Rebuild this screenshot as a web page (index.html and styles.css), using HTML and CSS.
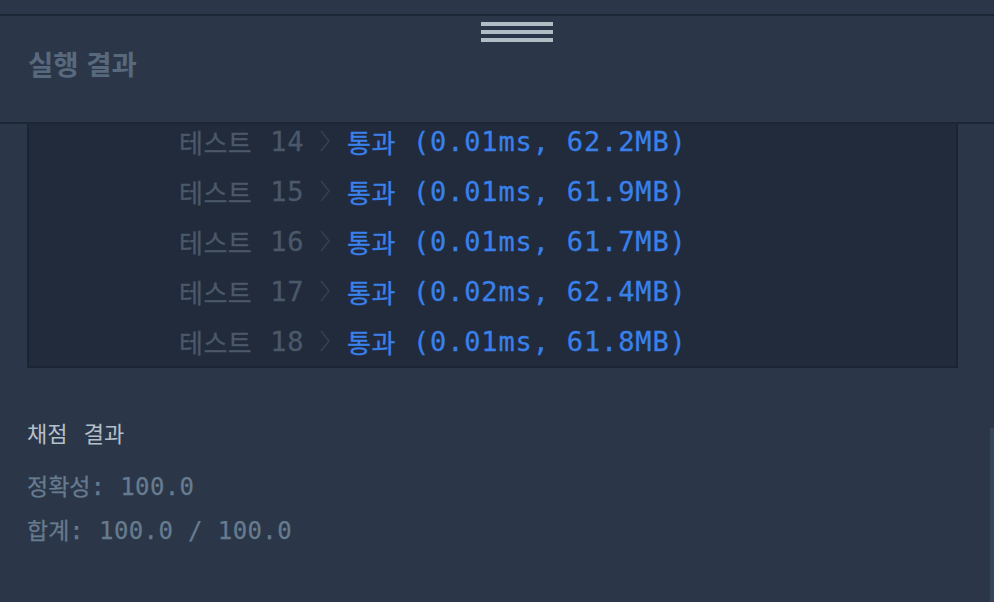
FILE: index.html
```html
<!DOCTYPE html>
<html lang="ko">
<head>
<meta charset="utf-8">
<title>실행 결과</title>
<link rel="stylesheet" href="styles.css">
</head>
<body>
<div class="page">
  <main class="content">
    <section class="tests">
      <div class="row"><span class="ko">테스트</span><span class="num">14</span><svg class="chev" viewBox="0 0 10 22" width="10" height="22"><path d="M1 1 L9 11 L1 21" fill="none" stroke="currentColor" stroke-width="1.4"/></svg><span class="res"><span class="ko">통과</span><span class="mono">(0.01ms, 62.2MB)</span></span></div>
      <div class="row"><span class="ko">테스트</span><span class="num">15</span><svg class="chev" viewBox="0 0 10 22" width="10" height="22"><path d="M1 1 L9 11 L1 21" fill="none" stroke="currentColor" stroke-width="1.4"/></svg><span class="res"><span class="ko">통과</span><span class="mono">(0.01ms, 61.9MB)</span></span></div>
      <div class="row"><span class="ko">테스트</span><span class="num">16</span><svg class="chev" viewBox="0 0 10 22" width="10" height="22"><path d="M1 1 L9 11 L1 21" fill="none" stroke="currentColor" stroke-width="1.4"/></svg><span class="res"><span class="ko">통과</span><span class="mono">(0.01ms, 61.7MB)</span></span></div>
      <div class="row"><span class="ko">테스트</span><span class="num">17</span><svg class="chev" viewBox="0 0 10 22" width="10" height="22"><path d="M1 1 L9 11 L1 21" fill="none" stroke="currentColor" stroke-width="1.4"/></svg><span class="res"><span class="ko">통과</span><span class="mono">(0.02ms, 62.4MB)</span></span></div>
      <div class="row"><span class="ko">테스트</span><span class="num">18</span><svg class="chev" viewBox="0 0 10 22" width="10" height="22"><path d="M1 1 L9 11 L1 21" fill="none" stroke="currentColor" stroke-width="1.4"/></svg><span class="res"><span class="ko">통과</span><span class="mono">(0.01ms, 61.8MB)</span></span></div>
    </section>
    <section class="score">
      <h3 class="score-title">채점 결과</h3>
      <p class="score-line"><span class="ko">정확성</span><span class="mono">: 100.0</span></p>
      <p class="score-line"><span class="ko">합계</span><span class="mono">: 100.0 / 100.0</span></p>
    </section>
  </main>
  <header class="panel-head">
    <div class="handle"><span></span><span></span><span></span></div>
    <h2 class="panel-title">실행 결과</h2>
  </header>
  <div class="scroll-thumb"></div>
</div>
</body>
</html>
```

FILE: styles.css
```css
* { box-sizing: border-box; }
html, body { margin: 0; padding: 0; }
body {
  background: #2b3748;
  font-family: "DejaVu Sans Mono", "Noto Sans CJK KR", monospace;
  overflow: hidden;
}
.page {
  position: relative;
  width: 994px;
  height: 602px;
  overflow: hidden;
  background: #2b3748;
}
.content {
  padding-top: 100px;
}
.tests {
  margin: 0 36px 0 27px;
  background: #212b3c;
  border: 2px solid #1b2433;
  border-top: none;
  padding: 16px 0 0 0;
}
.row {
  height: 50px;
  display: flex;
  align-items: center;
  padding-left: 150px;
  white-space: nowrap;
  -webkit-text-stroke: 0.3px currentColor;
}
.ko {
  font-family: "Noto Sans CJK KR", "Noto Sans", sans-serif;
  font-size: 26px;
  letter-spacing: 0.5px;
}
.row > .ko { color: #4b5869; }
.num {
  font-family: "DejaVu Sans Mono", monospace;
  font-size: 27px;
  letter-spacing: 0.65px;
  color: #4b5869;
  margin-left: 18px;
}
.chev {
  color: #364253;
  margin-left: 16px;
  flex: none;
}
.res {
  color: #3a80ea;
  margin-left: 17px;
  display: flex;
  align-items: center;
}
.res .mono {
  font-family: "DejaVu Sans Mono", monospace;
  font-size: 27px;
  letter-spacing: 0.85px;
  margin-left: 17px;
}
.score {
  padding: 0 27px;
  margin-top: 49px;
}
.score-title {
  margin: 0 0 16px 0;
  height: 30px;
  line-height: 30px;
  font-family: "Noto Sans CJK KR", sans-serif;
  font-weight: 400;
  font-size: 22px;
  color: #b5bfca;
  word-spacing: 10px;
}
.score-line {
  margin: 0;
  height: 44px;
  line-height: 44px;
  color: #677b8f;
  white-space: nowrap;
  -webkit-text-stroke: 0.25px currentColor;
}
.score-line .ko {
  font-size: 23px;
  letter-spacing: 0;
}
.score-line .mono {
  font-family: "DejaVu Sans Mono", monospace;
  font-size: 24px;
  letter-spacing: 0.4px;
}
.panel-head {
  position: absolute;
  top: 14px;
  left: 0;
  right: 0;
  height: 110px;
  background: #2b3748;
  border-top: 2px solid #1d2635;
  border-bottom: 2px solid #1d2635;
  padding: 6px 28px 0 28px;
  display: flex;
  flex-direction: column;
}
.handle {
  align-self: center;
  width: 72px;
  display: flex;
  flex-direction: column;
  gap: 4px;
  margin-left: 40px;
}
.handle span {
  display: block;
  height: 4px;
  background: #b2bcc4;
}
.panel-title {
  margin: 3px 0 0 0;
  height: 36px;
  line-height: 36px;
  font-family: "Noto Sans CJK KR", sans-serif;
  font-weight: 700;
  font-size: 27.5px;
  color: #58697e;
}
.scroll-thumb {
  position: absolute;
  right: 0;
  top: 428px;
  width: 4px;
  height: 174px;
  background: #36465a;
}
```
